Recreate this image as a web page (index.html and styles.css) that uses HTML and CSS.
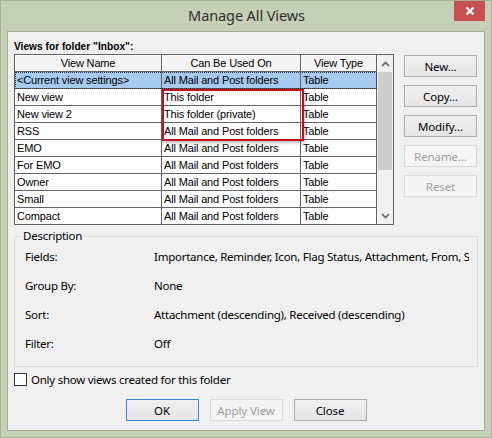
FILE: index.html
```html
<!DOCTYPE html>
<html>
<head>
<meta charset="utf-8">
<link rel="stylesheet" href="styles.css">
</head>
<body>
<div class="window">
  <div class="titlebar">
    <span></span>
    <div class="title">Manage All Views</div>
    <div class="close"><svg width="10" height="10" viewBox="0 0 10 10"><path d="M1.5 1.5 L8.5 8.5 M8.5 1.5 L1.5 8.5" stroke="#fff" stroke-width="2.2" fill="none"/></svg></div>
  </div>
  <div class="client">
    <div class="caption">Views for folder "Inbox":</div>
    <div class="top">
      <div class="list">
        <table class="grid">
          <colgroup><col class="c1"><col class="c2"><col class="c3"></colgroup>
          <thead>
            <tr><th>View Name</th><th>Can Be Used On</th><th>View Type</th></tr>
          </thead>
          <tbody>
            <tr class="sel"><td>&lt;Current view settings&gt;</td><td>All Mail and Post folders</td><td>Table</td></tr>
            <tr><td>New view</td><td>This folder</td><td>Table</td></tr>
            <tr><td>New view 2</td><td>This folder (private)</td><td>Table</td></tr>
            <tr><td>RSS</td><td>All Mail and Post folders</td><td>Table</td></tr>
            <tr><td>EMO</td><td>All Mail and Post folders</td><td>Table</td></tr>
            <tr><td>For EMO</td><td>All Mail and Post folders</td><td>Table</td></tr>
            <tr><td>Owner</td><td>All Mail and Post folders</td><td>Table</td></tr>
            <tr><td>Small</td><td>All Mail and Post folders</td><td>Table</td></tr>
            <tr class="last"><td>Compact</td><td>All Mail and Post folders</td><td>Table</td></tr>
          </tbody>
        </table>
        <div class="scrollbar">
          <div class="arrow"><svg width="9" height="6" viewBox="0 0 9 6"><path d="M1 5 L4.5 1.5 L8 5" stroke="#606060" stroke-width="1.6" fill="none"/></svg></div>
          <div class="thumb"></div>
          <div class="track"></div>
          <div class="arrow"><svg width="9" height="6" viewBox="0 0 9 6"><path d="M1 1 L4.5 4.5 L8 1" stroke="#606060" stroke-width="1.6" fill="none"/></svg></div>
        </div>
        <div class="highlight"></div>
      </div>
      <div class="side">
        <div class="btn">New...</div>
        <div class="btn">Copy...</div>
        <div class="btn">Modify...</div>
        <div class="btn disabled">Rename...</div>
        <div class="btn disabled">Reset</div>
      </div>
    </div>
    <fieldset class="desc">
      <legend>Description</legend>
      <div class="rows">
        <div class="lbl">Fields:</div><div class="val">Importance, Reminder, Icon, Flag Status, Attachment, From, Subject, Received, Size, Categories</div>
        <div class="lbl">Group By:</div><div class="val">None</div>
        <div class="lbl">Sort:</div><div class="val">Attachment (descending), Received (descending)</div>
        <div class="lbl">Filter:</div><div class="val">Off</div>
      </div>
    </fieldset>
    <label class="check"><span class="box"></span>Only show views created for this folder</label>
    <div class="bottom">
      <div class="btn default">OK</div>
      <div class="btn disabled">Apply View</div>
      <div class="btn">Close</div>
    </div>
  </div>
</div>
</body>
</html>
```
FILE: styles.css
```css
html, body {
  margin: 0;
  padding: 0;
}
body {
  background: #c6d0b6;
  font-family: "Noto Sans", "Open Sans", sans-serif;
}
.window {
  width: 492px;
  height: 438px;
  box-sizing: border-box;
  border: 1px solid #a7b195;
  background: #c6d0b6;
  padding: 0 6px 6px 6px;
  display: flex;
  flex-direction: column;
}
.titlebar {
  height: 30px;
  display: grid;
  grid-template-columns: 1fr auto 1fr;
}
.title {
  font-family: "Noto Sans", sans-serif;
  font-size: 14.5px;
  color: #2e2e2e;
  line-height: 28px;
  padding-left: 1px;
  letter-spacing: -0.1px;
}
.close {
  justify-self: end;
  width: 31px;
  height: 20px;
  background: #c75050;
  display: flex;
  align-items: center;
  justify-content: center;
}
.client {
  flex: 1;
  background: #f0f0f0;
  border: 1px solid #a3ab96;
  padding: 0 6px;
  display: flex;
  flex-direction: column;
}
.caption {
  font-family: "Liberation Sans", Arial, sans-serif;
  font-weight: bold;
  font-size: 10.2px;
  line-height: 13px;
  padding-top: 8px;
  margin-bottom: 1px;
  color: #000;
}
.top {
  display: flex;
  align-items: flex-start;
}
.list {
  position: relative;
  width: 380px;
  height: 171px;
  box-sizing: border-box;
  border: 1px solid #646464;
  background: #fff;
  display: flex;
}
.grid {
  width: 362px;
  table-layout: fixed;
  border-spacing: 0;
  font-family: "Liberation Sans", Arial, sans-serif;
  font-size: 11px;
  letter-spacing: -0.15px;
  color: #000;
}
.c1 { width: 147px; }
.c2 { width: 139px; }
.c3 { width: 76px; }
.grid th, .grid td {
  height: 16px;
  padding: 0 0 0 2px;
  border-right: 1px solid #646464;
  border-bottom: 1px solid #646464;
  white-space: nowrap;
  overflow: hidden;
  line-height: 16px;
  text-align: left;
  box-sizing: content-box;
}
.grid th {
  font-weight: normal;
  text-align: center;
  padding: 0;
  background: #f4f4f4;
  box-shadow: inset 1px 1px 0 #fff;
}
.grid tr.last td {
  border-bottom: none;
}
.grid tr.sel td {
  background: #a6caf0;
}
.grid tr.sel {
  outline: 1px dotted #333;
  outline-offset: -1px;
}
.scrollbar {
  width: 16px;
  display: flex;
  flex-direction: column;
  background: #f0f0f0;
}
.arrow {
  height: 17px;
  display: flex;
  align-items: center;
  justify-content: center;
  flex: none;
}
.thumb {
  height: 98px;
  margin: 0 1px;
  background: #cdcdcd;
  flex: none;
}
.track {
  flex: 1;
}
.highlight {
  position: absolute;
  left: 147px;
  top: 34px;
  width: 142px;
  height: 52px;
  box-sizing: border-box;
  border: 2px solid #c3111a;
  box-shadow: 1px 2px 3px rgba(0, 0, 0, 0.25);
}
.side {
  margin-left: 10px;
  margin-top: 1px;
  display: flex;
  flex-direction: column;
  gap: 8px;
}
.btn {
  width: 73px;
  height: 22px;
  box-sizing: border-box;
  border: 1px solid #acacac;
  background: linear-gradient(#f0f0f0, #e5e5e5);
  font-family: "Noto Sans", sans-serif;
  font-size: 11.5px;
  letter-spacing: -0.1px;
  color: #000;
  display: flex;
  align-items: center;
  justify-content: center;
}
.btn.disabled {
  border-color: #d9d9d9;
  background: #f4f4f4;
  color: #a0a0a0;
}
.btn.default {
  border-color: #3c88d8;
}
.desc {
  margin: 3px 0 0 0;
  width: 464px;
  box-sizing: border-box;
  border: 1px solid #dcdcdc;
  padding: 0 8px 8px 10px;
  font-family: "Noto Sans", sans-serif;
  font-size: 11.5px;
  letter-spacing: -0.25px;
  color: #000;
}
.desc legend {
  padding: 0 2px;
  margin-left: -4px;
  line-height: 16px;
}
.rows {
  display: grid;
  grid-template-columns: 129px 1fr;
  grid-auto-rows: 29px;
  align-items: center;
  margin-top: -2px;
}
.val {
  white-space: nowrap;
  overflow: hidden;
}
.check {
  display: flex;
  align-items: center;
  font-family: "Noto Sans", sans-serif;
  font-size: 11.5px;
  letter-spacing: -0.25px;
  margin-top: 5px;
  height: 14px;
}
.box {
  width: 13px;
  height: 13px;
  box-sizing: border-box;
  border: 1px solid #333;
  background: #fff;
  margin-right: 4px;
}
.bottom {
  margin-top: 13px;
  display: flex;
  justify-content: center;
  gap: 11px;
}
```
